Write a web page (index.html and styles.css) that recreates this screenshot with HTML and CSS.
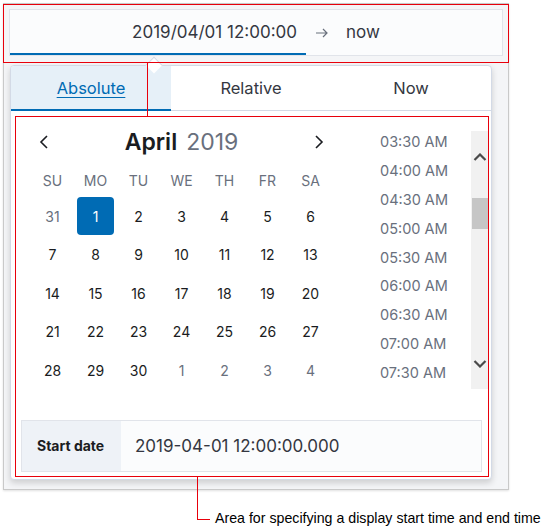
FILE: index.html
```html
<!DOCTYPE html>
<html lang="en">
  <head>
    <meta charset="UTF-8" />
    <title>Date picker</title>
    <link rel="stylesheet" href="styles.css">
  </head>
  <body>
    <div class="page">
      <div class="frame">
        <div class="range">
          <div class="rangeStart">2019/04/01 12:00:00</div>
          <div class="rangeArrow">
            <svg width="13" height="10" viewBox="0 0 13 10"><path d="M1 5h11M8 1l4 4-4 4" fill="none" stroke="#69707d" stroke-width="1.2"/></svg>
          </div>
          <div class="rangeEnd">now</div>
        </div>

        <div class="panel">
          <div class="notch"></div>
          <div class="tabs">
            <div class="tab active"><span>Absolute</span></div>
            <div class="tab">Relative</div>
            <div class="tab">Now</div>
          </div>

          <div class="panelBody">
            <div class="pickRow">
              <div class="calendar">
                <div class="calHead">
                  <svg width="10" height="16" viewBox="0 0 10 16"><path d="M8 2L2 8l6 6" fill="none" stroke="#1a1c21" stroke-width="1.6"/></svg>
                  <div class="month"><b>April</b><span>2019</span></div>
                  <svg width="10" height="16" viewBox="0 0 10 16"><path d="M2 2l6 6-6 6" fill="none" stroke="#1a1c21" stroke-width="1.6"/></svg>
                </div>
                <div class="dayNames">
                  <div>SU</div><div>MO</div><div>TU</div><div>WE</div><div>TH</div><div>FR</div><div>SA</div>
                </div>
                <div class="days" id="days"></div>
              </div>

              <div class="times">
                <div class="timeList">
                  <div>03:30 AM</div>
                  <div>04:00 AM</div>
                  <div>04:30 AM</div>
                  <div>05:00 AM</div>
                  <div>05:30 AM</div>
                  <div>06:00 AM</div>
                  <div>06:30 AM</div>
                  <div>07:00 AM</div>
                  <div>07:30 AM</div>
                </div>
                <div class="scrollbar">
                  <svg class="up" width="14" height="8" viewBox="0 0 14 8"><path d="M1.5 7L7 1.5 12.5 7" fill="none" stroke="#4a4a4a" stroke-width="2.2"/></svg>
                  <div class="thumb"></div>
                  <div class="spacer"></div>
                  <svg class="down" width="14" height="8" viewBox="0 0 14 8"><path d="M1.5 1L7 6.5 12.5 1" fill="none" stroke="#4a4a4a" stroke-width="2.2"/></svg>
                </div>
              </div>
            </div>

            <div class="startRow">
              <div class="startLabel">Start date</div>
              <div class="startValue">2019-04-01 12:00:00.000</div>
            </div>
          </div>
        </div>
      </div>

      <!-- annotation overlay -->
      <div class="mark markTop"></div>
      <div class="mark markBody"></div>
      <div class="line lineJoin"></div>
      <div class="line lineDown"></div>
      <div class="line lineRight"></div>
      <div class="note">Area for specifying a display start time and end time</div>
    </div>

    <script>
      let daysBox = document.getElementById("days");
      let cells = [31];
      for (let d = 1; d <= 30; d++) {
        cells.push(d);
      }
      cells.push(1, 2, 3, 4);

      cells.forEach(function (num, i) {
        let cell = document.createElement("div");
        cell.className = "day";
        if (i === 0 || i > 30) {
          cell.className += " other";
        }
        if (i === 1) {
          cell.className += " selected";
        }
        let inner = document.createElement("span");
        inner.innerText = num;
        cell.appendChild(inner);
        daysBox.appendChild(cell);
      });
    </script>
  </body>
</html>
```

FILE: styles.css
```css
* {
  margin: 0px;
  padding: 0px;
  box-sizing: border-box;
}
body {
  background-color: #fff;
  font-family: Inter, "Noto Sans", sans-serif;
  color: #343741;
}
.page {
  position: relative;
  width: 545px;
  height: 531px;
  padding: 3px 0 0 3px;
}
.frame {
  width: 506px;
  height: 487px;
  border: 1px solid #c9c9c9;
  background-color: #f4f5f7;
  padding: 5px 0 0 5px;
  box-shadow: 0 1px 2px rgba(0, 0, 0, 0.12);
}

/* top range input */
.range {
  width: 494px;
  height: 47px;
  border: 1px solid #e1e4ea;
  background-color: #fbfcfd;
  display: flex;
  align-items: stretch;
  font-size: 17px;
}
.rangeStart {
  width: 296px;
  text-align: right;
  padding-right: 9px;
  line-height: 44px;
  border-bottom: 2px solid #006bb4;
}
.rangeArrow {
  width: 30px;
  display: flex;
  align-items: center;
  justify-content: center;
}
.rangeEnd {
  padding-left: 10px;
  line-height: 44px;
}

/* popover */
.panel {
  position: relative;
  width: 482px;
  height: 415px;
  margin: 9px 0 0 1px;
  background-color: #fff;
  border: 1px solid #d3dae6;
  border-radius: 4px;
  box-shadow: 0 3px 6px rgba(0, 0, 0, 0.16);
}
.notch {
  position: absolute;
  left: 137px;
  top: -7px;
  width: 12px;
  height: 12px;
  background-color: #fff;
  border-left: 1px solid #d3dae6;
  border-top: 1px solid #d3dae6;
  transform: rotate(45deg);
}
.tabs {
  display: grid;
  grid-template-columns: 1fr 1fr 1fr;
  height: 45px;
  border-bottom: 1px solid #d3dae6;
}
.tab {
  display: flex;
  align-items: center;
  justify-content: center;
  font-size: 16.5px;
  color: #343741;
}
.tab.active {
  background-color: #e6f0f8;
  border-bottom: 2px solid #006bb4;
  margin-bottom: -1px;
  color: #006bb4;
  border-top-left-radius: 3px;
}
.tab.active span {
  text-decoration: underline;
  text-underline-offset: 3px;
}

.panelBody {
  padding: 16px 0 0 10px;
}
.pickRow {
  display: flex;
}
.calendar {
  flex-shrink: 0;
  width: 301px;
  margin-left: 10px;
}
.calHead {
  height: 30px;
  display: flex;
  align-items: center;
  justify-content: space-between;
  padding: 0 8px;
  margin-bottom: 12px;
}
.month {
  font-size: 23px;
  color: #1a1c21;
}
.month b {
  font-weight: 600;
  margin-right: 9px;
}
.month span {
  color: #69707d;
}
.dayNames {
  display: grid;
  grid-template-columns: repeat(7, 1fr);
  height: 24px;
  margin-bottom: 4px;
  font-size: 14px;
  color: #69707d;
  text-align: center;
  line-height: 24px;
}
.days {
  display: grid;
  grid-template-columns: repeat(7, 1fr);
  grid-auto-rows: 38.5px;
  font-size: 14px;
  color: #1a1c21;
}
.day {
  display: flex;
  align-items: center;
  justify-content: center;
}
.day span {
  width: 37px;
  height: 38px;
  display: flex;
  align-items: center;
  justify-content: center;
  border-radius: 4px;
}
.day.other {
  color: #69707d;
}
.day.selected span {
  background-color: #006bb4;
  color: #fff;
}

.times {
  flex-shrink: 0;
  display: flex;
  width: 129px;
  height: 262px;
  margin-left: 28px;
}
.timeList {
  width: 111px;
  padding-left: 20px;
  overflow: hidden;
  font-size: 14.5px;
  color: #69707d;
}
.timeList div {
  height: 28.9px;
  line-height: 29px;
}
.scrollbar {
  width: 18px;
  margin-top: 4px;
  background-color: #f1f1f1;
  display: flex;
  flex-direction: column;
  align-items: center;
}
.scrollbar .up {
  margin-top: 22px;
}
.thumb {
  width: 17px;
  height: 31px;
  margin-top: 37px;
  background-color: #c6c6c6;
}
.spacer {
  flex: 1;
}
.scrollbar .down {
  margin-bottom: 21px;
}

.startRow {
  display: flex;
  width: 461px;
  height: 52px;
  margin: 30px 0 0 0;
  border: 1px solid #e1e4ea;
  background-color: #fbfcfd;
}
.startLabel {
  width: 99px;
  background-color: #eef2f7;
  font-size: 14px;
  font-weight: 700;
  color: #1a1c21;
  padding-left: 15px;
  display: flex;
  align-items: center;
}
.startValue {
  padding-left: 14px;
  font-size: 17px;
  display: flex;
  align-items: center;
}

/* red annotation marks */
.mark {
  position: absolute;
  border: 1px solid #e8000b;
}
.markTop {
  left: 3px;
  top: 4px;
  width: 506px;
  height: 59px;
}
.markBody {
  left: 15px;
  top: 116px;
  width: 474px;
  height: 361px;
}
.line {
  position: absolute;
  background-color: #e8000b;
}
.lineJoin {
  left: 147px;
  top: 62px;
  width: 1px;
  height: 54px;
}
.lineDown {
  left: 197px;
  top: 476px;
  width: 1px;
  height: 44px;
}
.lineRight {
  left: 197px;
  top: 519px;
  width: 13px;
  height: 1px;
}
.note {
  position: absolute;
  left: 215px;
  top: 510px;
  font-family: "Liberation Sans", Arial, sans-serif;
  font-size: 14.2px;
  color: #000;
  white-space: nowrap;
}
```
